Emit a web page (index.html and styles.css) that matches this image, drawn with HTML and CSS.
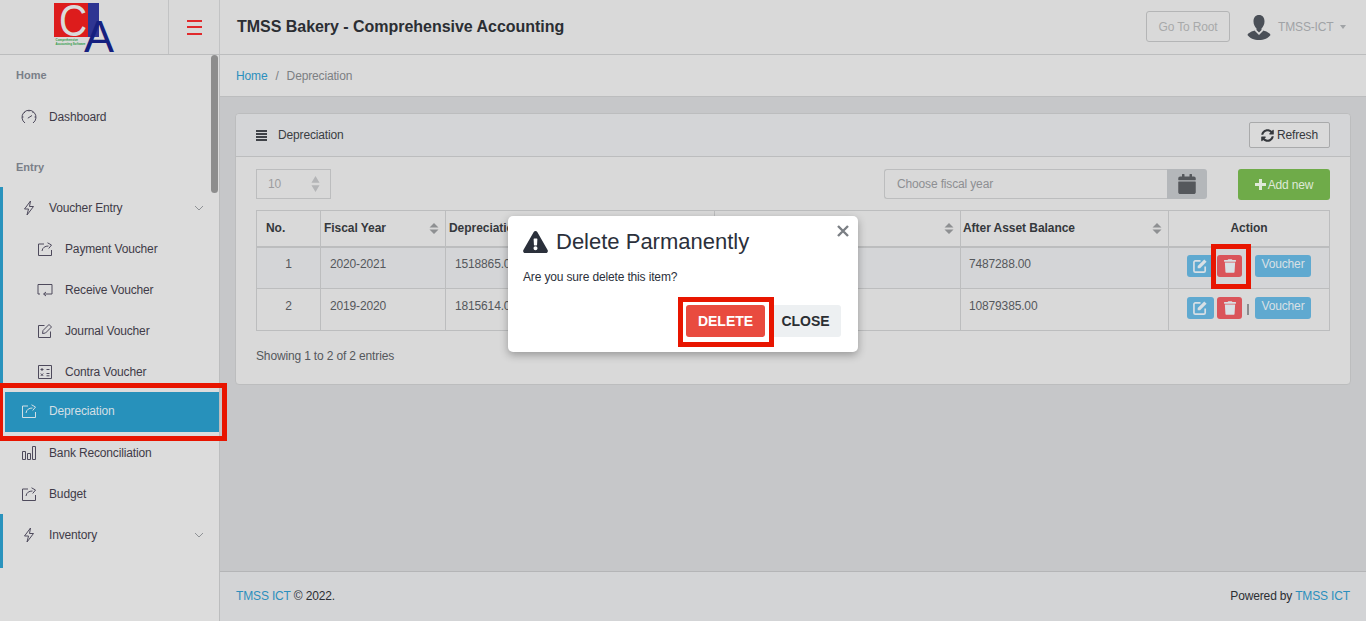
FILE: index.html
```html
<!DOCTYPE html>
<html>
<head>
    <title>TMSS Bakery - Comprehensive Accounting</title>
    <link rel="stylesheet" href="styles.css">
</head>
<body>
    <svg class="icon-defs" width="0" height="0">
        <symbol id="i-share" viewBox="0 0 16 16"><path d="M7 3H1.500v11.500h13V9M5 10c.5-3.500 3-5 6.500-5M10.500 1.800 14.500 4l-2.800 3.500" fill="none" stroke="currentColor"/></symbol>
        <symbol id="i-screen" viewBox="0 0 16 16"><path d="M3 12H1V2.500h14V12H7M9 10 6.500 12 9 14" fill="none" stroke="currentColor"/></symbol>
        <symbol id="i-pencil" viewBox="0 0 16 16"><path d="M7.500 2.500h-6v12h12v-6M5.500 10.500l.5-3L12 1.500l2.500 2.500-6 6z" fill="none" stroke="currentColor"/></symbol>
        <symbol id="i-calc" viewBox="0 0 16 16"><path d="M1.500 1.500h13v13h-13zM3.500 5.500h3M5 4v3M9.500 5.500h3M3.800 9.500l2.400 2.400M6.200 9.500l-2.400 2.400M9.500 9.500h3M9.500 11.800h3" fill="none" stroke="currentColor"/></symbol>
        <symbol id="i-bolt" viewBox="0 0 16 16"><path d="M9.500 1 3.500 9h4L6 15l6.500-8.500H8.500z" fill="none" stroke="currentColor"/></symbol>
        <symbol id="i-gauge" viewBox="0 0 16 16"><path d="M4 14A7 7 0 1 1 12 14M6.800 9.200 11 6.500M8 1v1.500M1 8h1.500M13.500 8H15M3 3l1 1M12.500 3l-1 1" fill="none" stroke="currentColor"/></symbol>
        <symbol id="i-bars" viewBox="0 0 16 16"><path d="M1.500 6.500h3v8h-3zM6.500 8.500h3v6h-3zM11.500 1.500h3v13h-3z" fill="none" stroke="currentColor"/></symbol>
        <symbol id="i-chev" viewBox="0 0 10 6"><path d="M1 1l4 4 4-4" fill="none" stroke="currentColor"/></symbol>
        <symbol id="i-sort" viewBox="0 0 10 12" preserveAspectRatio="none"><path d="M5 0l4.500 5H.5zM5 12l4.500-5H.5z" fill="currentColor"/></symbol>
        <symbol id="i-trash" viewBox="0 0 448 512"><path fill="currentColor" d="M432 32H312l-9.400-18.700A24 24 0 0 0 281.100 0H166.800a23.720 23.720 0 0 0-21.400 13.300L136 32H16A16 16 0 0 0 0 48v32a16 16 0 0 0 16 16h416a16 16 0 0 0 16-16V48a16 16 0 0 0-16-16zM53.200 467a48 48 0 0 0 47.900 45h245.800a48 48 0 0 0 47.900-45L416 128H32z"/></symbol>
        <symbol id="i-edit" viewBox="0 0 16 16"><path d="M8 3H2.500A1.500 1.500 0 0 0 1 4.500v9A1.500 1.500 0 0 0 2.500 15h9a1.500 1.500 0 0 0 1.500-1.500V9" fill="none" stroke="currentColor" stroke-width="1.800"/><path d="M5 8.500l7-7 2.500 2.500-7 7H5z" fill="currentColor"/></symbol>
    </svg>

    <header class="topbar">
        <div class="logo-cell">
            <svg class="logo" width="62" height="54" viewBox="0 0 62 54">
                <rect x="0" y="3" width="34" height="34" fill="#dd1c1c"/>
                <rect x="34" y="3" width="11" height="34" fill="#2e3592"/>
                <text x="5" y="36" class="logo-c" textLength="28" lengthAdjust="spacingAndGlyphs">C</text>
                <text x="30" y="52" class="logo-a">A</text>
                <text x="1.500" y="41" class="logo-small">Comprehensive</text>
                <text x="1.500" y="45" class="logo-small">Accounting Software</text>
            </svg>
        </div>
        <div class="toggle-cell">
            <span class="hamburger"></span>
        </div>
        <div class="app-title">TMSS Bakery - Comprehensive Accounting</div>
        <button class="root-btn">Go To Root</button>
        <div class="user">
            <svg class="avatar" width="26" height="26" viewBox="0 0 26 26">
                <path d="M13 1c3.500 0 5.500 2.500 5.500 6.500 0 3-1.500 5.500-3 7v1.500l-2.500 2.500-2.500-2.500v-1.500c-1.500-1.500-3-4-3-7C7.500 3.500 9.500 1 13 1z" fill="#4a4f57"/>
                <path d="M8.500 16.500 13 21l4.500-4.500c3 1 6.500 2.500 7 4.500-2 3-6.500 5-11.500 5S3.500 24 1.500 21c.5-2 4-3.500 7-4.500z" fill="#4a4f57"/>
            </svg>
            <span class="user-name">TMSS-ICT</span>
            <span class="caret"></span>
        </div>
    </header>

    <div class="layout">
        <aside class="sidebar">
            <div class="nav-title nav-title-first">Home</div>
            <a class="nav-item"><svg class="nav-icon"><use href="#i-gauge"/></svg>Dashboard</a>
            <div class="nav-title">Entry</div>
            <div class="nav-group">
                <a class="nav-item"><svg class="nav-icon"><use href="#i-bolt"/></svg>Voucher Entry<svg class="chev"><use href="#i-chev"/></svg></a>
                <a class="nav-item nav-sub"><svg class="nav-icon"><use href="#i-share"/></svg>Payment Voucher</a>
                <a class="nav-item nav-sub"><svg class="nav-icon"><use href="#i-screen"/></svg>Receive Voucher</a>
                <a class="nav-item nav-sub"><svg class="nav-icon"><use href="#i-pencil"/></svg>Journal Voucher</a>
                <a class="nav-item nav-sub"><svg class="nav-icon"><use href="#i-calc"/></svg>Contra Voucher</a>
            </div>
            <a class="nav-item nav-active"><svg class="nav-icon"><use href="#i-share"/></svg>Depreciation</a>
            <a class="nav-item"><svg class="nav-icon"><use href="#i-bars"/></svg>Bank Reconciliation</a>
            <a class="nav-item"><svg class="nav-icon"><use href="#i-share"/></svg>Budget</a>
            <div class="nav-group nav-group-last">
                <a class="nav-item"><svg class="nav-icon"><use href="#i-bolt"/></svg>Inventory<svg class="chev"><use href="#i-chev"/></svg></a>
            </div>
            <span class="scroll-thumb"></span>
        </aside>

        <main class="main">
            <div class="breadcrumb"><a class="link">Home</a><span class="crumb-sep">/</span><span class="crumb-now">Depreciation</span></div>
            <div class="content">
                <section class="card">
                    <div class="card-head">
                        <span class="list-icon"></span>
                        <span class="card-title">Depreciation</span>
                        <button class="refresh-btn">
                            <svg width="13" height="13" viewBox="0 0 512 512"><path fill="currentColor" d="M370.720 133.280C339.458 104.008 298.888 87.962 255.848 88c-77.458.068-144.328 53.178-162.791 126.850-1.344 5.363-6.122 9.150-11.651 9.150H24.103c-7.498 0-13.194-6.807-11.807-14.176C33.933 94.924 134.813 8 256 8c66.448 0 126.791 26.136 171.315 68.685L463.030 40.970C478.149 25.851 504 36.559 504 57.941V192c0 13.255-10.745 24-24 24H345.941c-21.382 0-32.090-25.851-16.971-40.971l41.750-41.749zM32 296h134.059c21.382 0 32.090 25.851 16.971 40.971l-41.750 41.750c31.262 29.273 71.835 45.319 114.876 45.280 77.418-.07 144.315-53.144 162.787-126.849 1.344-5.363 6.122-9.150 11.651-9.150h57.304c7.498 0 13.194 6.807 11.807 14.176C478.067 417.076 377.187 504 256 504c-66.448 0-126.791-26.136-171.315-68.685L48.970 471.030C33.851 486.149 8 475.441 8 454.059V320c0-13.255 10.745-24 24-24z"/></svg>
                            Refresh
                        </button>
                    </div>
                    <div class="card-body">
                        <div class="tools">
                            <div class="page-size"><span>10</span><svg class="size-sort"><use href="#i-sort"/></svg></div>
                            <div class="year-picker">
                                <div class="year-input">Choose fiscal year</div>
                                <div class="year-addon">
                                    <svg width="18" height="20" viewBox="0 0 448 512"><path fill="currentColor" d="M12 192h424c6.600 0 12 5.400 12 12v260c0 26.500-21.500 48-48 48H48c-26.500 0-48-21.500-48-48V204c0-6.600 5.400-12 12-12zm436-44v-36c0-26.500-21.500-48-48-48h-48V12c0-6.600-5.400-12-12-12h-40c-6.600 0-12 5.400-12 12v52H160V12c0-6.600-5.400-12-12-12h-40c-6.600 0-12 5.400-12 12v52H48C21.500 64 0 85.500 0 112v36c0 6.600 5.400 12 12 12h424c6.600 0 12-5.400 12-12z"/></svg>
                                </div>
                            </div>
                            <button class="add-btn"><span class="plus"></span>Add new</button>
                        </div>
                        <table class="data-table">
                            <colgroup>
                                <col class="c-no"><col class="c-year"><col class="c-dep"><col class="c-before"><col class="c-after"><col class="c-action">
                            </colgroup>
                            <thead>
                                <tr>
                                    <th class="th-no">No.</th>
                                    <th>Fiscal Year<svg class="sort"><use href="#i-sort"/></svg></th>
                                    <th>Depreciation Amount<svg class="sort"><use href="#i-sort"/></svg></th>
                                    <th>Before Asset Balance<svg class="sort"><use href="#i-sort"/></svg></th>
                                    <th class="th-after">After Asset Balance<svg class="sort"><use href="#i-sort"/></svg></th>
                                    <th class="th-action">Action</th>
                                </tr>
                            </thead>
                            <tbody>
                                <tr class="row-odd">
                                    <td class="td-no">1</td>
                                    <td class="td-wide">2020-2021</td>
                                    <td class="td-wide">1518865.00</td>
                                    <td>9006153.00</td>
                                    <td>7487288.00</td>
                                    <td class="td-action">
                                        <div class="actions">
                                            <button class="act act-edit"><svg width="15" height="15"><use href="#i-edit"/></svg></button>
                                            <button class="act act-del"><svg width="12" height="14"><use href="#i-trash"/></svg></button>
                                            <span class="act-sep"></span>
                                            <button class="act act-voucher">Voucher</button>
                                        </div>
                                    </td>
                                </tr>
                                <tr>
                                    <td class="td-no">2</td>
                                    <td class="td-wide">2019-2020</td>
                                    <td class="td-wide">1815614.00</td>
                                    <td>12694999.00</td>
                                    <td>10879385.00</td>
                                    <td class="td-action">
                                        <div class="actions">
                                            <button class="act act-edit"><svg width="15" height="15"><use href="#i-edit"/></svg></button>
                                            <button class="act act-del"><svg width="12" height="14"><use href="#i-trash"/></svg></button>
                                            <span class="act-sep act-sep-on"></span>
                                            <button class="act act-voucher">Voucher</button>
                                        </div>
                                    </td>
                                </tr>
                            </tbody>
                        </table>
                        <div class="entries">Showing 1 to 2 of 2 entries</div>
                    </div>
                </section>
            </div>
            <footer class="footer">
                <div><a class="link">TMSS ICT</a> &copy; 2022.</div>
                <div>Powered by <a class="link">TMSS ICT</a></div>
            </footer>
        </main>
    </div>

    <div class="modal">
        <div class="modal-head">
            <svg width="25" height="22" viewBox="0 0 576 512"><path fill="#2b303b" d="M569.517 440.013C587.975 472.007 564.806 512 527.940 512H48.054c-36.937 0-59.999-40.055-41.577-71.987L246.423 23.985c18.467-32.009 64.720-31.951 83.154 0l239.940 416.028zM288 354c-25.405 0-46 20.595-46 46s20.595 46 46 46 46-20.595 46-46-20.595-46-46-46zm-43.673-165.346l7.418 136c.347 6.364 5.609 11.346 11.982 11.346h48.546c6.373 0 11.635-4.982 11.982-11.346l7.418-136c.375-6.874-5.098-12.654-11.982-12.654h-63.383c-6.884 0-12.356 5.780-11.981 12.654z"/></svg>
            <span class="modal-title">Delete Parmanently</span>
        </div>
        <svg class="modal-close" width="12" height="12" viewBox="0 0 12 12"><path d="M1 1l10 10M11 1 1 11" stroke="#7b7f84" stroke-width="2.400" fill="none"/></svg>
        <p class="modal-text">Are you sure delete this item?</p>
        <div class="modal-foot">
            <button class="btn-delete">DELETE</button>
            <button class="btn-close">CLOSE</button>
        </div>
    </div>

    <span class="mark mark-nav"></span>
    <span class="mark mark-trash"></span>
    <span class="mark mark-delete"></span>
</body>
</html>
```
FILE: styles.css
```css
* {
    box-sizing: border-box;
}
html, body {
    height: 100%;
}
body {
    margin: 0;
    font-family: "Liberation Sans", Arial, sans-serif;
    font-size: 12px;
    letter-spacing: -0.15px;
    color: #3a3d42;
    background-color: #d9d9d9;
    overflow: hidden;
}
button {
    font-family: inherit;
    letter-spacing: inherit;
}
.icon-defs {
    position: absolute;
}
.link {
    color: #2b8fbd;
}

/* top bar */
.topbar {
    display: flex;
    align-items: center;
    height: 55px;
    background-color: #d9d9d9;
    border-bottom: 1px solid #bcbdbe;
}
.logo-cell {
    width: 169px;
    height: 54px;
    padding-left: 54px;
    border-right: 1px solid #c2c3c4;
}
.logo {
    display: block;
    overflow: visible;
}
.logo-c {
    font-size: 45px;
    fill: #dadada;
}
.logo-a {
    font-size: 45px;
    fill: #15207f;
}
.logo-small {
    font-size: 3px;
    font-weight: bold;
    fill: #2f9b47;
    letter-spacing: 0;
}
.toggle-cell {
    width: 51px;
    height: 54px;
    display: flex;
    align-items: center;
    justify-content: center;
    border-right: 1px solid #c2c3c4;
}
.hamburger {
    display: block;
    width: 15px;
    height: 15px;
    border-top: 2px solid #e1292c;
    border-bottom: 2px solid #e1292c;
    position: relative;
}
.hamburger::before {
    content: "";
    position: absolute;
    left: 0;
    right: 0;
    top: 4px;
    border-top: 2px solid #e1292c;
}
.app-title {
    flex: 1;
    margin-left: 17px;
    font-size: 16px;
    font-weight: bold;
    letter-spacing: -0.03px;
    color: #2b2e33;
}
.root-btn {
    width: 84px;
    height: 31px;
    margin-bottom: 1px;
    font-size: 12px;
    color: #a8a9aa;
    background: transparent;
    border: 1px solid #b4b5b6;
    border-radius: 3px;
}
.user {
    display: flex;
    align-items: center;
    width: 136px;
    padding-left: 16px;
}
.avatar {
    margin-right: 6px;
}
.user-name {
    color: #a0a3a6;
}
.caret {
    margin-left: 7px;
    border-top: 4px solid #a0a3a6;
    border-left: 3.500px solid transparent;
    border-right: 3.500px solid transparent;
}

/* sidebar */
.layout {
    display: flex;
    height: 566px;
}
.sidebar {
    position: relative;
    width: 220px;
    flex-shrink: 0;
    border-right: 1px solid #bcbdbe;
    background-color: #dcdcdc;
}
.nav-title {
    height: 24px;
    padding: 0 16px;
    line-height: 24px;
    font-size: 11px;
    font-weight: bold;
    letter-spacing: 0;
    color: #7a7f88;
    margin-top: 18px;
    margin-bottom: 8px;
}
.nav-title-first {
    margin-top: 8px;
    margin-bottom: 9px;
}
.nav-item {
    display: flex;
    align-items: center;
    height: 41px;
    padding-left: 21px;
    color: #3f3b48;
}
.nav-icon {
    width: 16px;
    height: 16px;
    margin-right: 12px;
    color: #4e4a5c;
}
.nav-sub {
    padding-left: 37px;
}
.chev {
    width: 10px;
    height: 6px;
    margin-left: auto;
    margin-right: 15px;
    color: #8f9296;
}
.nav-group {
    border-left: 3px solid #2a93bd;
}
.nav-group .nav-item {
    padding-left: 18px;
}
.nav-group .nav-sub {
    padding-left: 34px;
}
.nav-group-last {
    height: 54px;
}
.nav-active {
    height: 40px;
    margin-left: 5px;
    padding-left: 16px;
    padding-bottom: 2px;
    background-color: #2791bb;
    color: #d3dfe5;
}
.nav-active .nav-icon {
    color: #d3dfe5;
}
.scroll-thumb {
    position: absolute;
    right: 1px;
    top: 0;
    width: 7px;
    height: 138px;
    border-radius: 4px;
    background-color: #8d8d8d;
}

/* main */
.main {
    flex: 1;
    display: flex;
    flex-direction: column;
    background-color: #c6c7c9;
}
.breadcrumb {
    height: 42px;
    padding: 0 16px;
    display: flex;
    align-items: center;
    background-color: #dadada;
    border-bottom: 1px solid #bcbdbe;
    color: #7c7f83;
}
.crumb-sep {
    margin: 0 8px;
}
.content {
    flex: 1;
    padding: 16px 15px 0 15px;
}
.card {
    height: 272px;
    border: 1px solid #bcbdbe;
    border-radius: 4px;
    background-color: #d9d9d9;
}
.card-head {
    display: flex;
    align-items: center;
    height: 43px;
    padding: 0 20px;
    background-color: #d4d5d7;
    border-bottom: 1px solid #bcbdbe;
    border-radius: 4px 4px 0 0;
}
.list-icon {
    width: 11px;
    height: 11px;
    margin-right: 11px;
    background: repeating-linear-gradient(#3f4247 0, #3f4247 2px, transparent 2px, transparent 3px);
}
.card-title {
    flex: 1;
}
.refresh-btn {
    display: flex;
    align-items: center;
    justify-content: center;
    gap: 3px;
    width: 81px;
    height: 26px;
    font-size: 12px;
    color: #35383c;
    background-color: #dadada;
    border: 1px solid #a9aaab;
    border-radius: 2px;
    padding: 0;
}
.card-body {
    padding: 12px 20px 0 20px;
}
.tools {
    display: flex;
    align-items: flex-start;
    height: 31px;
    margin-bottom: 10px;
}
.page-size {
    display: flex;
    align-items: center;
    justify-content: space-between;
    width: 75px;
    height: 30px;
    padding: 0 10px 0 11px;
    color: #9c9d9f;
    border: 1px solid #bcbdbe;
}
.size-sort {
    width: 9px;
    height: 16px;
    color: #b4b5b7;
}
.year-picker {
    display: flex;
    height: 30px;
    margin-left: auto;
}
.year-input {
    width: 283px;
    padding-left: 12px;
    line-height: 28px;
    color: #8d8f92;
    border: 1px solid #bcbdbe;
    border-right: none;
    border-radius: 3px 0 0 3px;
}
.year-addon {
    display: flex;
    align-items: center;
    justify-content: center;
    width: 40px;
    color: #55585c;
    background-color: #b4b7ba;
    border-radius: 0 3px 3px 0;
}
.add-btn {
    display: flex;
    align-items: center;
    justify-content: center;
    gap: 2px;
    width: 92px;
    height: 31px;
    margin-left: 31px;
    font-size: 12px;
    color: #dfe9d8;
    background-color: #6fab49;
    border: none;
    border-radius: 3px;
    padding: 0;
}
.plus {
    position: relative;
    width: 11px;
    height: 11px;
}
.plus::before, .plus::after {
    content: "";
    position: absolute;
    background-color: #dfe9d8;
}
.plus::before {
    left: 0;
    right: 0;
    top: 4px;
    height: 3px;
}
.plus::after {
    top: 0;
    bottom: 0;
    left: 4px;
    width: 3px;
}

/* table */
.data-table {
    width: 1073px;
    table-layout: fixed;
    border-collapse: collapse;
    border: 1px solid #bcbdbe;
}
.c-no { width: 64px; }
.c-year { width: 125px; }
.c-dep { width: 269px; }
.c-before { width: 246px; }
.c-after { width: 208px; }
.c-action { width: 161px; }
.data-table th {
    position: relative;
    height: 36px;
    padding: 0 3px;
    text-align: left;
    letter-spacing: -0.05px;
    color: #35383c;
    border: 1px solid #bcbdbe;
    border-bottom: 2px solid #bcbdbe;
    white-space: nowrap;
    overflow: hidden;
}
.data-table .th-no {
    padding-left: 9px;
}
.data-table .th-after {
    padding-left: 2px;
}
.data-table .th-action {
    text-align: center;
}
.sort {
    position: absolute;
    right: 6px;
    top: 12px;
    width: 10px;
    height: 11px;
    color: #8e9092;
}
.data-table td {
    height: 42px;
    padding: 0 0 8px 8px;
    color: #55585c;
    border: 1px solid #bcbdbe;
}
.data-table .td-wide {
    padding-left: 9px;
}
.row-odd {
    background-color: #d4d5d7;
}
.data-table .td-no {
    padding-left: 0;
    text-align: center;
}
.data-table .td-action {
    padding: 0 0 4px 18px;
}
.actions {
    display: flex;
    align-items: center;
    height: 22px;
}
.act {
    display: flex;
    align-items: center;
    justify-content: center;
    height: 22px;
    padding: 0;
    border: none;
    border-radius: 3px;
    color: #d9e0e5;
}
.act-edit {
    width: 27px;
    background-color: #5fa9d0;
}
.act-del {
    width: 25px;
    margin-left: 3px;
    background-color: #da545a;
}
.act-sep {
    width: 2px;
    height: 11px;
    margin: 3px 6px 0 5px;
}
.act-sep-on {
    background-color: #8a8c8e;
}
.act-voucher {
    width: 56px;
    font-size: 12px;
    background-color: #5fa9d0;
    padding-bottom: 3px;
}
.entries {
    margin-top: 18px;
    color: #55585c;
}

/* footer */
.footer {
    display: flex;
    align-items: center;
    justify-content: space-between;
    height: 50px;
    padding: 0 16px 2px 16px;
    background-color: #d3d4d6;
    border-top: 1px solid #b4b5b7;
    color: #2b2e33;
}

/* dialog */
.modal {
    position: absolute;
    left: 508px;
    top: 216px;
    width: 350px;
    height: 136px;
    padding: 14px 15px;
    background-color: #fff;
    border-radius: 5px;
    box-shadow: 0 3px 9px rgba(0, 0, 0, 0.3);
}
.modal-head {
    display: flex;
    align-items: center;
    gap: 8px;
    height: 24px;
}
.modal-title {
    font-size: 22px;
    letter-spacing: 0;
    color: #2b303b;
}
.modal-close {
    position: absolute;
    right: 9px;
    top: 9px;
}
.modal-text {
    margin: 16px 0 0 0;
    line-height: 14px;
    color: #2b303b;
}
.modal-foot {
    position: absolute;
    right: 17px;
    top: 89px;
    display: flex;
    gap: 5px;
}
.btn-delete, .btn-close {
    height: 32px;
    font-size: 14px;
    font-weight: bold;
    letter-spacing: 0;
    border: none;
    border-radius: 3px;
    padding: 0;
}
.btn-delete {
    width: 79px;
    color: #fff;
    background-color: #e94b3f;
}
.btn-close {
    width: 71px;
    color: #2b2e33;
    background-color: #edf0f2;
}

/* red note frames */
.mark {
    position: absolute;
    border: 5px solid #e81500;
}
.mark-nav {
    left: -2px;
    top: 383px;
    width: 229px;
    height: 58px;
}
.mark-trash {
    left: 1211px;
    top: 244px;
    width: 40px;
    height: 45px;
}
.mark-delete {
    left: 678px;
    top: 297px;
    width: 96px;
    height: 50px;
}
```
